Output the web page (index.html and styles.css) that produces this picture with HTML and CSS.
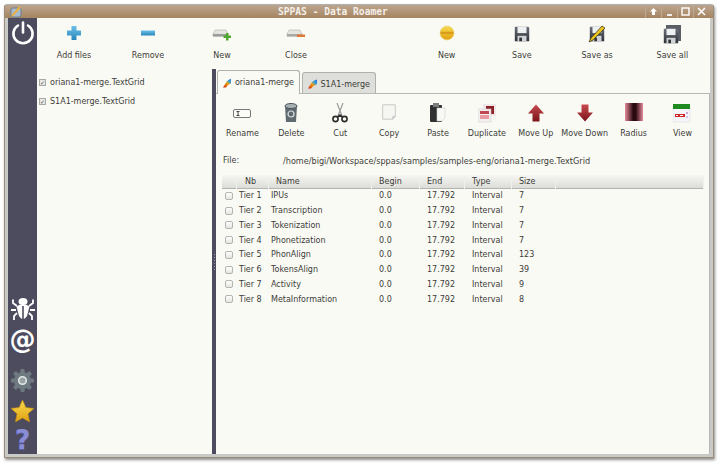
FILE: index.html
```html
<!DOCTYPE html>
<html>
<head>
	<title>SPPAS - Data Roamer</title>
	<link rel="stylesheet" href="styles.css">
</head>
<body>
	<svg class="defs" width="0" height="0">
		<defs>
			<linearGradient id="gBlue" x1="0" y1="0" x2="0" y2="1"><stop offset="0" stop-color="#6cc0ea"/><stop offset="1" stop-color="#2a86b8"/></linearGradient>
			<linearGradient id="gGold" x1="0" y1="0" x2="0" y2="1"><stop offset="0" stop-color="#f8dc50"/><stop offset="1" stop-color="#e0a010"/></linearGradient>
			<linearGradient id="gRed" x1="0" y1="0" x2="0" y2="1"><stop offset="0" stop-color="#c84a50"/><stop offset="1" stop-color="#7a1418"/></linearGradient>
			<linearGradient id="gRadius" x1="0" y1="0" x2="1" y2="0"><stop offset="0" stop-color="#e88a9c"/><stop offset=".45" stop-color="#2a0a10"/><stop offset=".6" stop-color="#2a0a10"/><stop offset="1" stop-color="#e88a9c"/></linearGradient>
			<linearGradient id="gTab" x1="0" y1="1" x2="1" y2="0"><stop offset="0" stop-color="#d02010"/><stop offset=".4" stop-color="#f0a010"/><stop offset=".6" stop-color="#30a0e0"/><stop offset="1" stop-color="#2040d0"/></linearGradient>
			<linearGradient id="gDisk" x1="0" y1="0" x2="0" y2="1"><stop offset="0" stop-color="#6a6f78"/><stop offset="1" stop-color="#2e3238"/></linearGradient>
			<symbol id="disk" viewBox="0 0 20 20">
				<path d="M2 2h15l1 1v15H2z" fill="url(#gDisk)"/>
				<rect x="5" y="2" width="10" height="7" fill="#eef0f2"/>
				<rect x="5" y="12" width="10" height="6" fill="#cfd2d6"/>
				<rect x="7" y="14" width="3" height="4" fill="#333"/>
			</symbol>
			<symbol id="tabIcon" viewBox="0 0 12 10">
				<path d="M0 9.500 4 3Q7 .5 12 0L10 5Q5 6 3 9.500z" fill="url(#gTab)"/>
			</symbol>
			<symbol id="sheet" viewBox="0 0 20 20">
				<path d="M3 2h14v13l-3 3H3z" fill="#f6f6f2" stroke="#c4c4c0"/>
				<path d="M17 15h-3v3z" fill="#ddd" stroke="#bbb" stroke-width=".6"/>
			</symbol>
		</defs>
	</svg>

	<div class="window">
		<div class="titlebar">
			<svg class="app-icon" width="14" height="14" viewBox="0 0 14 14"><rect x="2" y="3" width="10" height="9" rx="2" fill="#a8bcd0" stroke="#6f7f90"/><path d="M3 11 11 2" stroke="#e8b040" stroke-width="2"/></svg>
			<span class="title">SPPAS - Data Roamer</span>
			<div class="winbtns">
				<span class="winbtn"><svg width="9" height="9" viewBox="0 0 9 9"><path d="M4.500 1 8 4.500H6V8H3V4.500H1z" fill="#fff"/></svg></span>
				<span class="winbtn"><svg width="9" height="9" viewBox="0 0 9 9"><rect x="2" y="7" width="5" height="2" fill="#eee"/></svg></span>
				<span class="winbtn"><svg width="9" height="9" viewBox="0 0 9 9"><rect x="1" y="1" width="7" height="7" fill="none" stroke="#fff" stroke-width="1.400"/></svg></span>
				<span class="winbtn"><svg width="9" height="9" viewBox="0 0 9 9"><path d="M1 1 8 8M8 1 1 8" stroke="#fff" stroke-width="1.500"/></svg></span>
			</div>
		</div>

		<div class="frame">
			<div class="sidebar">
				<svg class="side-power" width="24" height="24" viewBox="0 0 24 24"><path d="M7 4.500a9.600 9.600 0 1 0 10 0" fill="none" stroke="#fff" stroke-width="2.600" stroke-linecap="round"/><path d="M12 1.500v10" stroke="#fff" stroke-width="2.600" stroke-linecap="round"/></svg>
				<div class="side-space"></div>
				<svg class="side-bug" width="24" height="22" viewBox="0 0 24 22">
					<ellipse cx="12" cy="3.500" rx="4.500" ry="3.500" fill="#fff"/>
					<path d="M5.500 8.500Q12 4 18.500 8.500L16 18Q14 21 12.800 21V8h-1.600V21Q10 21 8 18z" fill="#fff"/>
					<path d="M6 8 2 5V1.500M18 8l4-3V1.500M5 12H0M19 12h5M6 15l-3 3v4M18 15l3 3v4" stroke="#fff" stroke-width="1.800" fill="none"/>
				</svg>
				<span class="side-at">@</span>
				<svg class="side-gear" width="23" height="23" viewBox="0 0 24 24">
					<g fill="#6f7a80"><rect x="9.800" y="0" width="4.400" height="24" rx="1"/><rect x="9.800" y="0" width="4.400" height="24" rx="1" transform="rotate(45 12 12)"/><rect x="9.800" y="0" width="4.400" height="24" rx="1" transform="rotate(90 12 12)"/><rect x="9.800" y="0" width="4.400" height="24" rx="1" transform="rotate(135 12 12)"/><circle cx="12" cy="12" r="9"/></g>
					<circle cx="12" cy="12" r="4" fill="#9aa4a8" stroke="#e4e8e8" stroke-width="1.600"/>
				</svg>
				<svg class="side-star" width="23" height="22" viewBox="0 0 24 23"><path d="M12 0 15.500 7.800 24 8.800 17.700 14.500 19.400 23 12 18.700 4.600 23 6.300 14.500 0 8.800 8.500 7.800z" fill="url(#gGold)" stroke="#c89010" stroke-width=".6"/></svg>
				<span class="side-help">?</span>
			</div>

			<div class="main">
				<div class="toolbar">
					<div class="tool-group">
						<div class="tool"><svg width="16" height="16" viewBox="0 0 16 16"><path d="M5.500 1h5v4.500H15v5h-4.500V15h-5v-4.500H1v-5h4.500z" fill="url(#gBlue)"/></svg><span>Add files</span></div>
						<div class="tool"><svg width="16" height="16" viewBox="0 0 16 16"><rect x="1" y="5.500" width="14" height="5" fill="url(#gBlue)"/></svg><span>Remove</span></div>
						<div class="tool"><svg width="20" height="16" viewBox="0 0 20 16"><path d="M3 5h11l2 4v2H1V9z" fill="#e4e4e0" stroke="#b0b0ac" stroke-width=".6"/><rect x="1" y="9" width="15" height="2.500" fill="#9a9c98"/><path d="M14 8h2.500v2.500H19V13h-2.500v2.500H14V13h-2.500v-2.500H14z" fill="#50a830"/></svg><span>New</span></div>
						<div class="tool"><svg width="20" height="16" viewBox="0 0 20 16"><path d="M3 5h11l2 4v2H1V9z" fill="#e4e4e0" stroke="#b0b0ac" stroke-width=".6"/><rect x="1" y="9" width="15" height="2.500" fill="#a8a8a4"/><rect x="11" y="9.500" width="8" height="2.500" fill="#e07838"/></svg><span>Close</span></div>
					</div>
					<div class="tool-group tool-group-right">
						<div class="tool"><svg width="16" height="16" viewBox="0 0 16 16"><circle cx="8" cy="8" r="6.800" fill="url(#gGold)" stroke="#e8c040" stroke-dasharray="1.500 1"/><rect x="1.500" y="6.800" width="13" height="2.200" fill="#d89c18"/></svg><span>New</span></div>
						<div class="tool"><svg width="18" height="18"><use href="#disk" width="18" height="18"/></svg><span>Save</span></div>
						<div class="tool"><svg width="18" height="18" viewBox="0 0 18 18"><use href="#disk" width="18" height="18"/><path d="M1 17 3 13 14 1 17 3 5 15z" fill="#e8c020" stroke="#3a3010" stroke-width=".7"/></svg><span>Save as</span></div>
						<div class="tool"><svg width="20" height="20" viewBox="0 0 20 20"><rect x="4" y="0" width="15" height="16" fill="#5a5e66"/><use href="#disk" y="2" width="18" height="18"/></svg><span>Save all</span></div>
					</div>
				</div>

				<div class="content">
					<ul class="filelist">
						<li><span class="filecheck">&#10003;</span>oriana1-merge.TextGrid</li>
						<li><span class="filecheck">&#10003;</span>S1A1-merge.TextGrid</li>
					</ul>
					<div class="splitter"><i class="grip"></i></div>
					<div class="notebook">
						<div class="tabs">
							<div class="tab tab-active"><svg width="12" height="10"><use href="#tabIcon" width="12" height="10"/></svg>oriana1-merge</div>
							<div class="tab"><svg width="12" height="10"><use href="#tabIcon" width="12" height="10"/></svg>S1A1-merge</div>
						</div>
						<div class="page">
							<div class="actions">
								<div class="action"><svg width="18" height="18" viewBox="0 0 18 18"><rect x=".5" y="5.500" width="17" height="8" rx="1.500" fill="#fbfbf8" stroke="#777"/><path d="M3.500 7.500h3M3.500 11.500h3M5 7.500v4" stroke="#444"/></svg><span>Rename</span></div>
								<div class="action"><svg width="16" height="20" viewBox="0 0 16 20"><path d="M2 3h12l-1 16H3z" fill="#5f6a70"/><ellipse cx="8" cy="3" rx="6" ry="2.500" fill="#a8b0b4" stroke="#4a5256"/><circle cx="8" cy="11" r="3" fill="none" stroke="#d8dde0" stroke-width="1.200"/></svg><span>Delete</span></div>
								<div class="action"><svg width="16" height="20" viewBox="0 0 16 20"><path d="M5 0 10 13M11 0 6 13" stroke="#9a9c9c" stroke-width="1.200"/><circle cx="3.500" cy="16" r="2.600" fill="none" stroke="#2c2c2c" stroke-width="1.600"/><circle cx="12.500" cy="16" r="2.600" fill="none" stroke="#2c2c2c" stroke-width="1.600"/><path d="M9.500 12 5 14M6.500 12 11 14" stroke="#2c2c2c" stroke-width="1.400"/></svg><span>Cut</span></div>
								<div class="action"><svg width="18" height="18"><use href="#sheet" width="18" height="18"/></svg><span>Copy</span></div>
								<div class="action"><svg width="18" height="20" viewBox="0 0 18 20"><rect x="1" y="2" width="12" height="17" rx="1" fill="#2e3032"/><rect x="4" y="0" width="6" height="4" fill="#7a7c7e"/><path d="M8 5h8v10l-3 3H8z" fill="#f8f8f4" stroke="#ccc" stroke-width=".6"/></svg><span>Paste</span></div>
								<div class="action"><svg width="18" height="18" viewBox="0 0 18 18"><rect x="5" y="0" width="13" height="12" fill="#f0e8e8"/><path d="M8 2h8v8h-3V5H8z" fill="#8c2026"/><rect x="0" y="5" width="13" height="13" fill="#f2f0f0" stroke="#d8d0d0" stroke-width=".6"/><rect x="2" y="7" width="9" height="3" fill="#c04850"/><rect x="2" y="11" width="9" height="4" fill="#e89ca2"/></svg><span>Duplicate</span></div>
								<div class="action"><svg width="16" height="17" viewBox="0 0 16 17"><path d="M8 0 16 9H11.500V17H4.500V9H0z" fill="url(#gRed)"/></svg><span>Move Up</span></div>
								<div class="action"><svg width="16" height="17" viewBox="0 0 16 17"><path d="M8 17 16 8H11.500V0H4.500V8H0z" fill="url(#gRed)"/></svg><span>Move Down</span></div>
								<div class="action"><svg width="18" height="18"><rect width="18" height="18" fill="url(#gRadius)"/></svg><span>Radius</span></div>
								<div class="action"><svg width="18" height="20" viewBox="0 0 18 20"><rect x="0" y="3" width="17" height="16" fill="#f6f6fa" stroke="#ddd" stroke-width=".6"/><rect x="0" y="1" width="17" height="5" fill="#1e8a20"/><rect x="2" y="11" width="10" height="3" fill="#d02828"/><path d="M3 12.500h2M7 12.500h3" stroke="#fff"/><rect x="13" y="9" width="2" height="2" fill="#c8a8e0"/><rect x="13" y="13" width="2" height="2" fill="#c8c8e8"/></svg><span>View</span></div>
							</div>
							<div class="fileinfo"><span class="fileinfo-label">File:</span><span class="fileinfo-path">/home/bigi/Workspace/sppas/samples/samples-eng/oriana1-merge.TextGrid</span></div>
							<div class="tiers">
								<div class="tiers-head">
									<span></span><span class="nb">Nb</span><span>Name</span><span>Begin</span><span>End</span><span>Type</span><span>Size</span><span></span>
								</div>
								<div class="tier-row"><i class="box"></i><span>Tier 1</span><span>IPUs</span><span>0.0</span><span>17.792</span><span>Interval</span><span>7</span></div>
								<div class="tier-row"><i class="box"></i><span>Tier 2</span><span>Transcription</span><span>0.0</span><span>17.792</span><span>Interval</span><span>7</span></div>
								<div class="tier-row"><i class="box"></i><span>Tier 3</span><span>Tokenization</span><span>0.0</span><span>17.792</span><span>Interval</span><span>7</span></div>
								<div class="tier-row"><i class="box"></i><span>Tier 4</span><span>Phonetization</span><span>0.0</span><span>17.792</span><span>Interval</span><span>7</span></div>
								<div class="tier-row"><i class="box"></i><span>Tier 5</span><span>PhonAlign</span><span>0.0</span><span>17.792</span><span>Interval</span><span>123</span></div>
								<div class="tier-row"><i class="box"></i><span>Tier 6</span><span>TokensAlign</span><span>0.0</span><span>17.792</span><span>Interval</span><span>39</span></div>
								<div class="tier-row"><i class="box"></i><span>Tier 7</span><span>Activity</span><span>0.0</span><span>17.792</span><span>Interval</span><span>9</span></div>
								<div class="tier-row"><i class="box"></i><span>Tier 8</span><span>MetaInformation</span><span>0.0</span><span>17.792</span><span>Interval</span><span>8</span></div>
							</div>
						</div>
					</div>
				</div>
			</div>
		</div>
	</div>
</body>
</html>
```
FILE: styles.css
```css
* {
  box-sizing: border-box;
}

html, body {
  margin: 0;
  height: 100%;
  background: #fff;
  overflow: hidden;
}

body {
  padding: 4px 0 0 4px;
  font-family: "DejaVu Sans", sans-serif;
  font-size: 8px;
  color: #3c3c38;
}

.defs {
  position: absolute;
}

.window {
  width: 710px;
  height: 454px;
  display: flex;
  flex-direction: column;
  border: 1px solid #9c8a7a;
  border-top-color: #b0b0ae;
  border-radius: 3px 3px 0 0;
  box-shadow: 1px 2px 3px rgba(0, 0, 0, .45);
}

.titlebar {
  height: 13px;
  flex: none;
  display: flex;
  align-items: center;
  background: linear-gradient(#bba590, #a6845f);
  position: relative;
}

.app-icon {
  margin-left: 4px;
}

.title {
  position: absolute;
  left: 273px;
  font-family: "DejaVu Sans Mono", monospace;
  font-size: 9.600px;
  font-weight: bold;
  color: #f4efe8;
  white-space: pre;
}

.winbtns {
  margin-left: auto;
  margin-right: 4px;
  display: flex;
}

.winbtn {
  width: 16px;
  height: 13px;
  display: flex;
  align-items: center;
  justify-content: center;
  border-left: 1px solid #bca894;
}

.frame {
  flex: 1;
  min-height: 0;
  display: flex;
  padding: 0 3px 3px 3px;
  background: #c9c9c7;
}

.sidebar {
  width: 29px;
  flex: none;
  display: flex;
  flex-direction: column;
  align-items: center;
  background: #4c4c5e;
  padding: 3px 0 3px;
}

.side-space {
  flex: 1;
}

.side-bug {
  margin-bottom: 7px;
}

.side-at {
  font-size: 26px;
  font-weight: bold;
  color: #fff;
  line-height: 24px;
  height: 24px;
}

.side-gear {
  margin-top: 18px;
}

.side-star {
  margin-top: 8px;
}

.side-help {
  margin-top: 6px;
  font-size: 27px;
  font-weight: bold;
  line-height: 23px;
  height: 23px;
  color: #8a8cd6;
  text-shadow: 0 1px 0 #5a5ca8;
}

.main {
  flex: 1;
  min-width: 0;
  display: flex;
  flex-direction: column;
  background: #fafaf5;
}

.toolbar {
  height: 50px;
  flex: none;
  display: flex;
  justify-content: space-between;
}

.tool-group {
  display: flex;
}

.tool {
  width: 74px;
  height: 50px;
  display: flex;
  flex-direction: column;
  align-items: center;
  position: relative;
  padding-top: 7px;
}

.tool-group-right .tool {
  width: 75.250px;
}

.tool span {
  position: absolute;
  top: 33px;
  white-space: nowrap;
}

.content {
  flex: 1;
  min-height: 0;
  display: flex;
}

.filelist {
  width: 175px;
  flex: none;
  list-style: none;
  margin: 0;
  padding: 5px 0 0 2px;
}

.filelist li {
  height: 19px;
  display: flex;
  align-items: center;
  white-space: nowrap;
}

.filecheck {
  width: 7px;
  height: 7px;
  margin-right: 4px;
  flex: none;
  background: #e8e8e4;
  border: 1px solid #a8a8a4;
  font-size: 6px;
  line-height: 5px;
  color: #555;
  text-align: center;
}

.splitter {
  width: 4px;
  flex: none;
  margin-top: 1px;
  background: #4c4c5e;
  display: flex;
  align-items: center;
  justify-content: center;
}

.grip {
  display: block;
  width: 1px;
  height: 16px;
  background: repeating-linear-gradient(#9a9aa8 0 1px, transparent 1px 3px);
}

.notebook {
  flex: 1;
  min-width: 0;
  display: flex;
  flex-direction: column;
  padding-top: 2px;
}

.tabs {
  height: 24px;
  flex: none;
  display: flex;
  align-items: flex-end;
  gap: 2px;
  padding-left: 1px;
  position: relative;
  z-index: 1;
}

.tab {
  height: 21px;
  padding: 2px 5px 0;
  display: flex;
  align-items: center;
  gap: 4px;
  width: 74px;
  border: 1px solid #b0b0ac;
  border-bottom: none;
  border-radius: 3px 3px 0 0;
  background: #dededa;
  margin-bottom: 1px;
  white-space: nowrap;
}

.tab-active {
  width: 83px;
  height: 24px;
  padding-top: 0;
  background: #fafaf5;
  margin-bottom: 0;
}

.page {
  flex: 1;
  min-height: 0;
  border-top: 1px solid #b8b8b4;
  border-right: 1px solid #b8b8b4;
  margin-top: -1px;
  padding-left: 2px;
}

.actions {
  height: 52px;
  display: flex;
}

.action {
  width: 48.900px;
  height: 52px;
  display: flex;
  justify-content: center;
  position: relative;
  padding-top: 9px;
}

.action svg {
  height: 20px;
}

.action span {
  position: absolute;
  top: 35px;
  white-space: nowrap;
}

.fileinfo {
  height: 15px;
  margin-top: 7px;
  padding-left: 5px;
  display: flex;
  align-items: center;
  white-space: nowrap;
}

.fileinfo-label {
  width: 60px;
}

.fileinfo-path {
  font-size: 8.150px;
}

.tiers {
  margin-left: 4px;
  width: 482px;
  margin-top: 7px;
}

.tiers-head, .tier-row {
  display: grid;
  grid-template-columns: 15px 32px 103px 48px 45px 47px 44px 1fr;
  align-items: center;
}

.tiers-head {
  height: 14px;
  margin-bottom: -.500px;
  background: linear-gradient(#f6f6f2, #dcdcd8);
  border-bottom: 1px solid #b4b4b0;
}

.tiers-head span {
  height: 14px;
  line-height: 14px;
  padding-left: 7px;
  border-right: 1px solid #efefeb;
}

.tiers-head .nb {
  padding-left: 8px;
}

.tier-row {
  height: 14.750px;
}

.tier-row span {
  padding-left: 2px;
  white-space: nowrap;
}

.tier-row span:nth-child(n+4) {
  padding-left: 7px;
}

.box {
  display: block;
  width: 8px;
  height: 8px;
  margin-left: 3px;
  border: 1px solid #b4b4b0;
  border-radius: 2px;
  background: linear-gradient(#fff, #e4e4e0);
}
```
